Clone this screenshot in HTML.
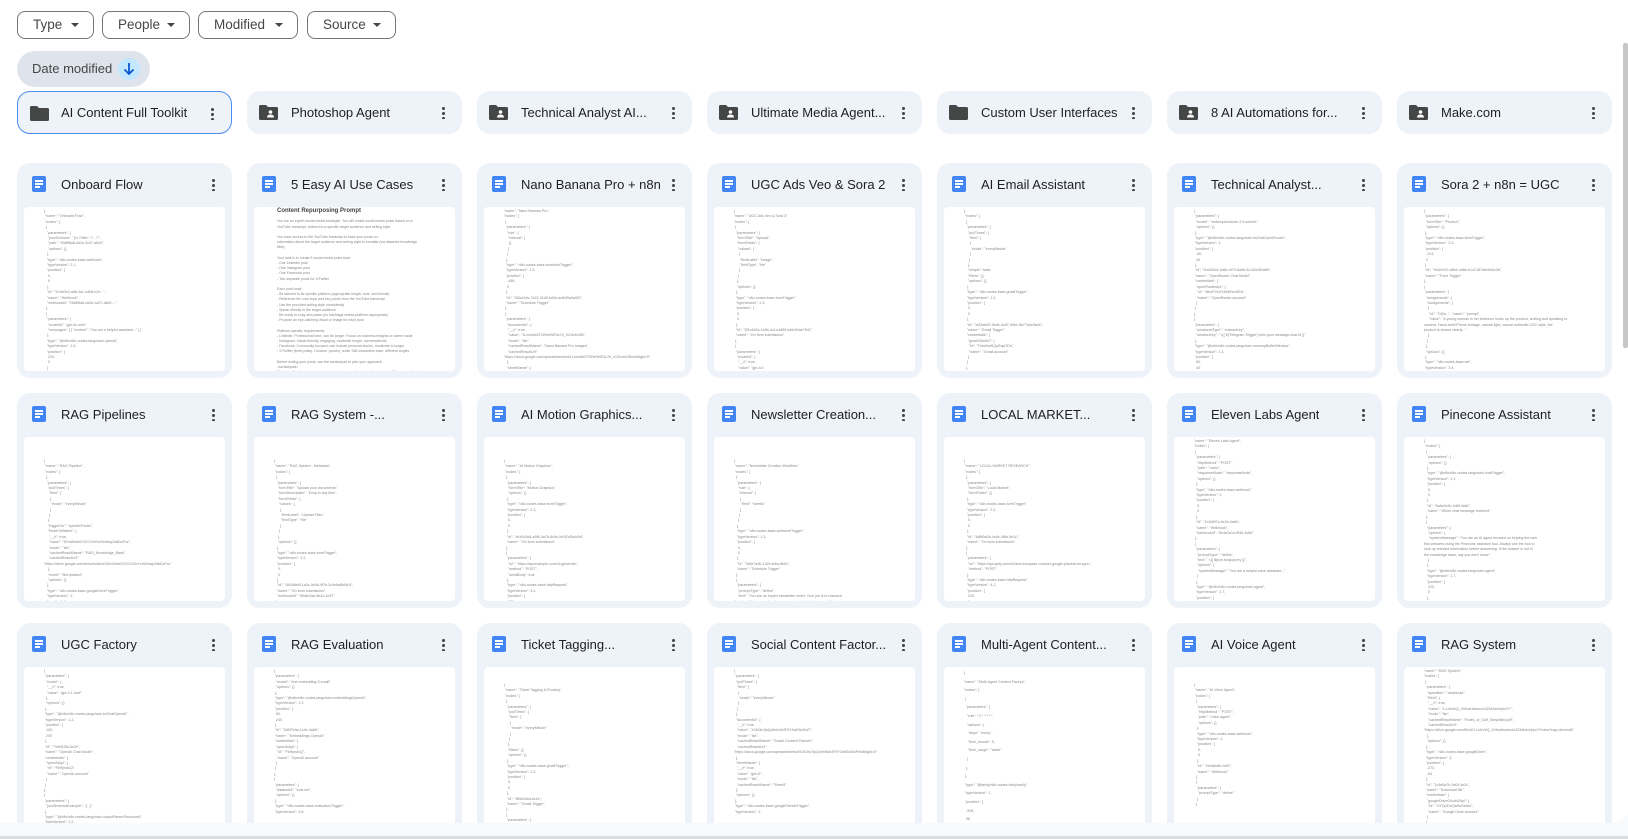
<!DOCTYPE html>
<html><head><meta charset="utf-8"><style>
*{box-sizing:border-box;margin:0;padding:0}
body{width:1628px;height:839px;overflow:hidden;background:#f8fafd;font-family:"Liberation Sans",Arial,sans-serif;color:#1f1f1f;position:relative}
.panel{position:absolute;left:0;top:0;width:1628px;height:823px;background:#fff;border-bottom-right-radius:14px;overflow:hidden}
.line{position:absolute;left:0;top:836px;width:1628px;height:3px;background:#dadce0}
.chip{position:absolute;top:11px;height:28px;border:1px solid #747775;border-radius:8px;font-size:13.5px;line-height:26px;padding-left:15px;color:#444746}
.chip:after{content:"";position:absolute;right:14px;top:11px;border-left:4px solid transparent;border-right:4px solid transparent;border-top:4px solid #444746}
.sort{position:absolute;left:17px;top:51px;width:133px;height:36px;border-radius:18px;background:#dfe3eb;font-size:13px;line-height:36px;padding-left:15px;color:#444746}
.sort .ar{position:absolute;left:101px;top:7px;width:22px;height:22px;border-radius:11px;background:#c2e7ff}
.card{position:absolute;width:215px;background:#eef2f9;border-radius:13px;overflow:hidden}
.folder{height:43px;top:91px}
.folder.sel{background:#eef2f9;border:1px solid #4d8df0}
.doc{height:215px}
.t{position:absolute;left:44px;max-width:142px;overflow:hidden;text-overflow:ellipsis;font-size:13px;color:#1f1f1f;white-space:nowrap}
.folder .t{top:14px}
.folder.sel .t{top:13px;left:43px}
.doc .t{top:14px}
.k{position:absolute;right:17px;width:3px;height:13px;background:radial-gradient(circle,#444746 1.4px,transparent 1.6px) 0 0/3px 5px repeat-y}
.folder .k{top:15px}
.doc .k{top:15px}
.fi{position:absolute;left:12px;top:14px;width:19px;height:15px}
.di{position:absolute;left:15px;top:13px;width:14px;height:16px;background:#4285f4;border-radius:2px}
.di i{position:absolute;left:3px;width:8px;height:1.6px;background:#fff}
.pv{position:absolute;left:7px;top:44px;width:201px;height:164px;background:#fff;border-radius:4px;overflow:hidden}
.pv pre{position:absolute;left:20px;top:2px;font-family:"Liberation Sans",sans-serif;font-size:3.6px;line-height:5.4px;color:#888;white-space:pre}
.sb{position:absolute;left:1623px;top:43px;width:5px;height:305px;background:#c7c7c7;border-radius:2px}
</style></head><body>
<div class="panel">
<div class="chip" style="left:17px;width:77px">Type</div>
<div class="chip" style="left:102px;width:88px">People</div>
<div class="chip" style="left:198px;width:100px">Modified</div>
<div class="chip" style="left:307px;width:89px">Source</div>
<div class="sort">Date modified<span class="ar"><svg width="22" height="22" viewBox="0 0 22 22"><path d="M11 5v11M6.5 11.5L11 16l4.5-4.5" stroke="#0b57d0" stroke-width="1.8" fill="none"/></svg></span></div>

<div class="card folder sel" style="left:17px"><svg class="fi" viewBox="0 0 19 15"><path d="M0 1.5Q0 0 1.5 0H7l2 2h8.5Q19 2 19 3.5V13.5Q19 15 17.5 15H1.5Q0 15 0 13.5Z" fill="#444746"/></svg><span class="t">AI Content Full Toolkit</span><span class="k"></span></div>
<div class="card folder" style="left:247px"><svg class="fi" viewBox="0 0 19 15"><path d="M0 1.5Q0 0 1.5 0H7l2 2h8.5Q19 2 19 3.5V13.5Q19 15 17.5 15H1.5Q0 15 0 13.5Z" fill="#444746"/><circle cx="11.5" cy="7" r="1.8" fill="#fff"/><path d="M8 12.5q0-3 3.5-3t3.5 3z" fill="#fff"/></svg><span class="t">Photoshop Agent</span><span class="k"></span></div>
<div class="card folder" style="left:477px"><svg class="fi" viewBox="0 0 19 15"><path d="M0 1.5Q0 0 1.5 0H7l2 2h8.5Q19 2 19 3.5V13.5Q19 15 17.5 15H1.5Q0 15 0 13.5Z" fill="#444746"/><circle cx="11.5" cy="7" r="1.8" fill="#fff"/><path d="M8 12.5q0-3 3.5-3t3.5 3z" fill="#fff"/></svg><span class="t">Technical Analyst AI...</span><span class="k"></span></div>
<div class="card folder" style="left:707px"><svg class="fi" viewBox="0 0 19 15"><path d="M0 1.5Q0 0 1.5 0H7l2 2h8.5Q19 2 19 3.5V13.5Q19 15 17.5 15H1.5Q0 15 0 13.5Z" fill="#444746"/><circle cx="11.5" cy="7" r="1.8" fill="#fff"/><path d="M8 12.5q0-3 3.5-3t3.5 3z" fill="#fff"/></svg><span class="t">Ultimate Media Agent...</span><span class="k"></span></div>
<div class="card folder" style="left:937px"><svg class="fi" viewBox="0 0 19 15"><path d="M0 1.5Q0 0 1.5 0H7l2 2h8.5Q19 2 19 3.5V13.5Q19 15 17.5 15H1.5Q0 15 0 13.5Z" fill="#444746"/></svg><span class="t">Custom User Interfaces</span><span class="k"></span></div>
<div class="card folder" style="left:1167px"><svg class="fi" viewBox="0 0 19 15"><path d="M0 1.5Q0 0 1.5 0H7l2 2h8.5Q19 2 19 3.5V13.5Q19 15 17.5 15H1.5Q0 15 0 13.5Z" fill="#444746"/><circle cx="11.5" cy="7" r="1.8" fill="#fff"/><path d="M8 12.5q0-3 3.5-3t3.5 3z" fill="#fff"/></svg><span class="t">8 AI Automations for...</span><span class="k"></span></div>
<div class="card folder" style="left:1397px"><svg class="fi" viewBox="0 0 19 15"><path d="M0 1.5Q0 0 1.5 0H7l2 2h8.5Q19 2 19 3.5V13.5Q19 15 17.5 15H1.5Q0 15 0 13.5Z" fill="#444746"/><circle cx="11.5" cy="7" r="1.8" fill="#fff"/><path d="M8 12.5q0-3 3.5-3t3.5 3z" fill="#fff"/></svg><span class="t">Make.com</span><span class="k"></span></div>

<!-- row 1 -->
<div class="card doc" style="left:17px;top:163px"><span class="di"><i style="top:4px"></i><i style="top:7px"></i><i style="top:10px;width:5px"></i></span><span class="t">Onboard Flow</span><span class="k"></span><div class="pv"><pre>{
 "name": "Onboard Flow",
 "nodes": [
  {
   "parameters": {
    "jsonSchema": "{\n \"title\": \"...\"",
    "path": "f3d8f6a8-dd2e-4c07-a6c0",
    "options": {}
   },
   "type": "n8n-nodes-base.webhook",
   "typeVersion": 2.1,
   "position": [
    0,
    0
   ],
   "id": "b7ab0e3-dd6-4a1-a4b8-b2e...",
   "name": "Webhook",
   "webhookId": "f3d8f6a8-dd2e-4c07-a6c0-..."
  },
  {
   "parameters": {
    "modelId": "gpt-4o-mini",
    "messages": [ { "content": "You are a helpful assistant..." } ]
   },
   "type": "@n8n/n8n-nodes-langchain.openAi",
   "typeVersion": 1.8,
   "position": [
    220,
    0
   ]
  },
  "id": "8a02c1b4-ad62-4e0d-ba83",
  "name": "OpenAI"
 ]
}</pre></div></div>
<div class="card doc" style="left:247px;top:163px"><span class="di"><i style="top:4px"></i><i style="top:7px"></i><i style="top:10px;width:5px"></i></span><span class="t">5 Easy AI Use Cases</span><span class="k"></span><div class="pv"><pre style="left:23px;font-size:3.5px;line-height:5.2px"><b style="font-size:6px;color:#444">Content Repurposing Prompt</b>

You are an expert social media strategist. You will create social media posts based on a
YouTube transcript, tailored to a specific target audience and writing style.

You have access to the YouTube transcript to base your posts on,
information about the target audience and writing style to emulate (via attached knowledge
files).

Your task is to create 5 social media posts total:
- One LinkedIn post
- One Instagram post
- One Facebook post
- Two separate posts for X/Twitter

Each post must:
- Be tailored to its specific platform (appropriate length, tone, and format)
- Reference the core topic and key points from the YouTube transcript
- Use the provided writing style consistently
- Speak directly to the target audience
- Be ready to copy-and-paste (no hashtags unless platform-appropriate)
- Propose an eye-catching visual or image for each post

Platform-specific requirements:
- LinkedIn: Professional tone, can be longer. Focus on business insights or career value
- Instagram: Visual-friendly, engaging, moderate length, conversational
- Facebook: Community-focused, can include personal stories, moderate to longer
- X/Twitter (both posts): Concise, punchy, under 280 characters each, different angles

Before writing your posts, use the scratchpad to plan your approach
&lt;scratchpad&gt;
First, identify the core topic and main value proposition from the transcript. Then, consider how</pre></div></div>
<div class="card doc" style="left:477px;top:163px"><span class="di"><i style="top:4px"></i><i style="top:7px"></i><i style="top:10px;width:5px"></i></span><span class="t">Nano Banana Pro + n8n</span><span class="k"></span><div class="pv"><pre>"name": "Nano Banana Pro",
"nodes": [
 {
  "parameters": {
   "rule": {
    "interval": [
     {}
    ]
   }
  },
  "type": "n8n-nodes-base.scheduleTrigger",
  "typeVersion": 1.2,
  "position": [
   -496,
   0
  ],
  "id": "4f3a1b9c-7e22-41d0-bd3e-acfb30a5a0f3",
  "name": "Schedule Trigger"
 },
 {
  "parameters": {
   "documentId": {
    "__rl": true,
    "value": "1LnvbAb3TOHe0WE3z7e_X2Jlv4nGB",
    "mode": "list",
    "cachedResultName": "Nano Banana Pro Images",
    "cachedResultUrl":
"https://docs.google.com/spreadsheets/d/1LnvbAb3TOHe0WE3z7e_X2Jlv4nGB/edit#gid=0"
   },
   "sheetName": {
    "__rl": true,
    "value": "gid=0",
    "mode": "list"
   }
  }
 }</pre></div></div>
<div class="card doc" style="left:707px;top:163px"><span class="di"><i style="top:4px"></i><i style="top:7px"></i><i style="top:10px;width:5px"></i></span><span class="t">UGC Ads Veo &amp; Sora 2</span><span class="k"></span><div class="pv"><pre>{
"name": "UGC Ads Veo & Sora 2",
"nodes": [
 {
  "parameters": {
   "formTitle": "Upload",
   "formFields": {
    "values": [
     {
      "fieldLabel": "Image",
      "fieldType": "file"
     }
    ]
   },
   "options": {}
  },
  "type": "n8n-nodes-base.formTrigger",
  "typeVersion": 2.3,
  "position": [
   0,
   0
  ],
  "id": "5f1c4d2a-1e6b-4c1a-b89f-ba9c02ae75d1",
  "name": "On form submission"
 },
 {
  "parameters": {
   "modelId": {
    "__rl": true,
    "value": "gpt-4o",
    "mode": "list"
   },
   "messages": { "values": [ { "content": "..." } ] }
  }
 }</pre></div></div>
<div class="card doc" style="left:937px;top:163px"><span class="di"><i style="top:4px"></i><i style="top:7px"></i><i style="top:10px;width:5px"></i></span><span class="t">AI Email Assistant</span><span class="k"></span><div class="pv"><pre>{
 "nodes": [
  {
   "parameters": {
    "pollTimes": {
     "item": [
      {
       "mode": "everyMinute"
      }
     ]
    },
    "simple": false,
    "filters": {},
    "options": {}
   },
   "type": "n8n-nodes-base.gmailTrigger",
   "typeVersion": 1.3,
   "position": [
    0,
    0
   ],
   "id": "c0f3ab92-5bde-4c87-90b2-ffa77a0e9a2e",
   "name": "Gmail Trigger",
   "credentials": {
    "gmailOAuth2": {
     "id": "ThsbHwSQyGqwTDs",
     "name": "Gmail account"
    }
   }
  },
  {
   "parameters": {
    "inputText": "={{ $json.text }}"
   }
  }</pre></div></div>
<div class="card doc" style="left:1167px;top:163px"><span class="di"><i style="top:4px"></i><i style="top:7px"></i><i style="top:10px;width:5px"></i></span><span class="t">Technical Analyst...</span><span class="k"></span><div class="pv"><pre>{
 "parameters": {
  "model": "anthropic/claude-3.5-sonnet",
  "options": {}
 },
 "type": "@n8n/n8n-nodes-langchain.lmChatOpenRouter",
 "typeVersion": 1,
 "position": [
  -80,
  40
 ],
 "id": "f1a2b3c4-5d6e-4f70-8a9b-0c1d2e3f4a5b",
 "name": "OpenRouter Chat Model",
 "credentials": {
  "openRouterApi": {
   "id": "tkbcPVvXXMl1fNe4Ehe",
   "name": "OpenRouter account"
  }
 }
},
{
 "parameters": {
  "sessionIdType": "customKey",
  "sessionKey": "={{ $('Telegram Trigger').item.json.message.chat.id }}"
 },
 "type": "@n8n/n8n-nodes-langchain.memoryBufferWindow",
 "typeVersion": 1.3,
 "position": [
  60,
  40
 ],
 "id": "7e0a4b12-93cd-4e1f-a5b6-1c2d3e4f5a6b",
 "name": "Simple Memory"
},</pre></div></div>
<div class="card doc" style="left:1397px;top:163px"><span class="di"><i style="top:4px"></i><i style="top:7px"></i><i style="top:10px;width:5px"></i></span><span class="t">Sora 2 + n8n = UGC</span><span class="k"></span><div class="pv"><pre>{
 "parameters": {
  "formTitle": "Product",
  "options": {}
 },
 "type": "n8n-nodes-base.formTrigger",
 "typeVersion": 2.3,
 "position": [
  -224,
  0
 ],
 "id": "9c3e2f10-a8b4-4d8e-b1c2-8f7a6e5d4c3b",
 "name": "Form Trigger"
},
{
 "parameters": {
  "assignments": {
   "assignments": [
    {
     "id": "7d2a...", "name": "prompt",
     "value": "A young woman in her bedroom holds up the product, smiling and speaking to
camera. Hand-held iPhone footage, natural light, casual authentic UGC style, the
product is shown clearly..."
    }
   ]
  },
  "options": {}
 },
 "type": "n8n-nodes-base.set",
 "typeVersion": 3.4,
 "position": [
  0,
  0
 ],
 "id": "2f4e6a8c-0b1d-4e3f-9a7c",
 "name": "Edit Fields"
},</pre></div></div>

<!-- row 2 -->
<div class="card doc" style="left:17px;top:393px"><span class="di"><i style="top:4px"></i><i style="top:7px"></i><i style="top:10px;width:5px"></i></span><span class="t">RAG Pipelines</span><span class="k"></span><div class="pv"><pre style="top:22px">{
 "name": "RAG Pipeline",
 "nodes": [
  {
   "parameters": {
    "pollTimes": {
     "item": [
      {
       "mode": "everyMinute"
      }
     ]
    },
    "triggerOn": "specificFolder",
    "folderToWatch": {
     "__rl": true,
     "value": "1EmWwbXVOCUVkYmSnNwp3dkDzFxz",
     "mode": "list",
     "cachedResultName": "RAG_Knowledge_Base",
     "cachedResultUrl":
"https://drive.google.com/drive/folders/1EmWwbXVOCUVkYmSnNwp3dkDzFxz"
    },
    "event": "fileUpdated",
    "options": {}
   },
   "type": "n8n-nodes-base.googleDriveTrigger",
   "typeVersion": 1,
   "position": [
    -528,
    -64
   ]</pre></div></div>
<div class="card doc" style="left:247px;top:393px"><span class="di"><i style="top:4px"></i><i style="top:7px"></i><i style="top:10px;width:5px"></i></span><span class="t">RAG System -...</span><span class="k"></span><div class="pv"><pre style="top:22px">{
 "name": "RAG System - Metadata",
 "nodes": [
  {
   "parameters": {
    "formTitle": "Upload your documents",
    "formDescription": "Drop in any files",
    "formFields": {
     "values": [
      {
       "fieldLabel": "Upload Files",
       "fieldType": "file"
      }
     ]
    },
    "options": {}
   },
   "type": "n8n-nodes-base.formTrigger",
   "typeVersion": 2.2,
   "position": [
    0,
    0
   ],
   "id": "4b2d8e6f-1a3c-4e5d-9f7b-2c4e6a8b0d1f",
   "name": "On form submission",
   "webhookId": "5fe8c2ad-9b41-4e37"
  },
  {
   "parameters": {</pre></div></div>
<div class="card doc" style="left:477px;top:393px"><span class="di"><i style="top:4px"></i><i style="top:7px"></i><i style="top:10px;width:5px"></i></span><span class="t">AI Motion Graphics...</span><span class="k"></span><div class="pv"><pre style="top:22px">{
 "name": "AI Motion Graphics",
 "nodes": [
  {
   "parameters": {
    "formTitle": "Motion Graphics",
    "options": {}
   },
   "type": "n8n-nodes-base.formTrigger",
   "typeVersion": 2.3,
   "position": [
    0,
    0
   ],
   "id": "a1b2c3d4-e5f6-4a7b-8c9d-0e1f2a3b4c5d",
   "name": "On form submission"
  },
  {
   "parameters": {
    "url": "https://api.example.com/v1/generate",
    "method": "POST",
    "sendBody": true
   },
   "type": "n8n-nodes-base.httpRequest",
   "typeVersion": 4.2,
   "position": [
    220,
    0
   ]
  }</pre></div></div>
<div class="card doc" style="left:707px;top:393px"><span class="di"><i style="top:4px"></i><i style="top:7px"></i><i style="top:10px;width:5px"></i></span><span class="t">Newsletter Creation...</span><span class="k"></span><div class="pv"><pre style="top:22px">{
 "name": "Newsletter Creation Workflow",
 "nodes": [
  {
   "parameters": {
    "rule": {
     "interval": [
      {
       "field": "weeks"
      }
     ]
    }
   },
   "type": "n8n-nodes-base.scheduleTrigger",
   "typeVersion": 1.2,
   "position": [
    0,
    0
   ],
   "id": "3c5e7a9b-1d2f-4e6a-8b0c",
   "name": "Schedule Trigger"
  },
  {
   "parameters": {
    "promptType": "define",
    "text": "You are an expert newsletter writer. Your job is to research
the latest AI news and write an engaging, informative newsletter for a
business audience. Focus on practical takeaways, real tools and
concrete examples..."
   }
  }</pre></div></div>
<div class="card doc" style="left:937px;top:393px"><span class="di"><i style="top:4px"></i><i style="top:7px"></i><i style="top:10px;width:5px"></i></span><span class="t">LOCAL MARKET...</span><span class="k"></span><div class="pv"><pre style="top:22px">{
 "name": "LOCAL MARKET RESEARCH",
 "nodes": [
  {
   "parameters": {
    "formTitle": "Local Market",
    "formFields": {}
   },
   "type": "n8n-nodes-base.formTrigger",
   "typeVersion": 2.2,
   "position": [
    0,
    0
   ],
   "id": "6d8f0a2b-4c6e-4f8a-9b1c",
   "name": "On form submission"
  },
  {
   "parameters": {
    "url": "https://api.apify.com/v2/acts/compass~crawler-google-places/run-sync",
    "method": "POST"
   },
   "type": "n8n-nodes-base.httpRequest",
   "typeVersion": 4.2,
   "position": [
    220,
    0
   ],
   "id": "0e2a4c6b-8d1f",
   "name": "HTTP Request"
  }</pre></div></div>
<div class="card doc" style="left:1167px;top:393px"><span class="di"><i style="top:4px"></i><i style="top:7px"></i><i style="top:10px;width:5px"></i></span><span class="t">Eleven Labs Agent</span><span class="k"></span><div class="pv"><pre>"name": "Eleven Labs Agent",
"nodes": [
 {
  "parameters": {
   "httpMethod": "POST",
   "path": "voice",
   "responseMode": "responseNode",
   "options": {}
  },
  "type": "n8n-nodes-base.webhook",
  "typeVersion": 2,
  "position": [
   0,
   0
  ],
  "id": "1b3d5f7a-9c2e-4a6b",
  "name": "Webhook",
  "webhookId": "8c4e2a1d-6f3b-4d5e"
 },
 {
  "parameters": {
   "promptType": "define",
   "text": "={{ $json.body.query }}",
   "options": {
    "systemMessage": "You are a helpful voice assistant..."
   }
  },
  "type": "@n8n/n8n-nodes-langchain.agent",
  "typeVersion": 1.7,
  "position": [
   220,
   0
  ]</pre></div></div>
<div class="card doc" style="left:1397px;top:393px"><span class="di"><i style="top:4px"></i><i style="top:7px"></i><i style="top:10px;width:5px"></i></span><span class="t">Pinecone Assistant</span><span class="k"></span><div class="pv"><pre>{
 "nodes": [
  {
   "parameters": {
    "options": {}
   },
   "type": "@n8n/n8n-nodes-langchain.chatTrigger",
   "typeVersion": 1.1,
   "position": [
    0,
    0
   ],
   "id": "6a8c0e2b-4d6f-4a8c",
   "name": "When chat message received"
  },
  {
   "parameters": {
    "options": {
     "systemMessage": "You are an AI agent focused on helping the user
find answers using the Pinecone assistant tool. Always use the tool to
look up relevant information before answering. If the answer is not in
the knowledge base, say you don't know."
    }
   },
   "type": "@n8n/n8n-nodes-langchain.agent",
   "typeVersion": 1.7,
   "position": [
    220,
    0
   ],
   "id": "9e1a3c5b-7d0f",
   "name": "AI Agent"
  },</pre></div></div>

<!-- row 3 -->
<div class="card doc" style="left:17px;top:623px"><span class="di"><i style="top:4px"></i><i style="top:7px"></i><i style="top:10px;width:5px"></i></span><span class="t">UGC Factory</span><span class="k"></span><div class="pv"><pre>{
 "parameters": {
  "model": {
   "__rl": true,
   "value": "gpt-4.1-mini"
  },
  "options": {}
 },
 "type": "@n8n/n8n-nodes-langchain.lmChatOpenAi",
 "typeVersion": 1.2,
 "position": [
  100,
  200
 ],
 "id": "7b9d1f3a-5c2e",
 "name": "OpenAI Chat Model",
 "credentials": {
  "openAiApi": {
   "id": "FkHjmAvQ",
   "name": "OpenAI account"
  }
 }
},
{
 "parameters": {
  "jsonSchemaExample": "{...}"
 },
 "type": "@n8n/n8n-nodes-langchain.outputParserStructured",
 "typeVersion": 1.2,</pre></div></div>
<div class="card doc" style="left:247px;top:623px"><span class="di"><i style="top:4px"></i><i style="top:7px"></i><i style="top:10px;width:5px"></i></span><span class="t">RAG Evaluation</span><span class="k"></span><div class="pv"><pre>{
 "parameters": {
  "model": "text-embedding-3-small",
  "options": {}
 },
 "type": "@n8n/n8n-nodes-langchain.embeddingsOpenAi",
 "typeVersion": 1.2,
 "position": [
  80,
  240
 ],
 "id": "3d5f7b9a-1c4e-4a6b",
 "name": "Embeddings OpenAI",
 "credentials": {
  "openAiApi": {
   "id": "FkHjmAvQ",
   "name": "OpenAI account"
  }
 }
},
{
 "parameters": {
  "datasetId": "eval-set",
  "options": {}
 },
 "type": "n8n-nodes-base.evaluationTrigger",
 "typeVersion": 4.6,</pre></div></div>
<div class="card doc" style="left:477px;top:623px"><span class="di"><i style="top:4px"></i><i style="top:7px"></i><i style="top:10px;width:5px"></i></span><span class="t">Ticket Tagging...</span><span class="k"></span><div class="pv"><pre style="top:16px">{
 "name": "Ticket Tagging & Routing",
 "nodes": [
  {
   "parameters": {
    "pollTimes": {
     "item": [
      {
       "mode": "everyMinute"
      }
     ]
    },
    "filters": {},
    "options": {}
   },
   "type": "n8n-nodes-base.gmailTrigger",
   "typeVersion": 1.3,
   "position": [
    0,
    0
   ],
   "id": "8f0b2d4a-6c1e",
   "name": "Gmail Trigger"
  },
  {
   "parameters": {</pre></div></div>
<div class="card doc" style="left:707px;top:623px"><span class="di"><i style="top:4px"></i><i style="top:7px"></i><i style="top:10px;width:5px"></i></span><span class="t">Social Content Factor...</span><span class="k"></span><div class="pv"><pre>{
 "parameters": {
  "pollTimes": {
   "item": [
    {
     "mode": "everyMinute"
    }
   ]
  },
  "documentId": {
   "__rl": true,
   "value": "1Xb2kL9pQz8mN4vR7tY3wE6uI0oP",
   "mode": "list",
   "cachedResultName": "Social Content Planner",
   "cachedResultUrl":
"https://docs.google.com/spreadsheets/d/1Xb2kL9pQz8mN4vR7tY3wE6uI0oP/edit#gid=0"
  },
  "sheetName": {
   "__rl": true,
   "value": "gid=0",
   "mode": "list",
   "cachedResultName": "Sheet1"
  },
  "options": {}
 },
 "type": "n8n-nodes-base.googleSheetsTrigger",
 "typeVersion": 1,</pre></div></div>
<div class="card doc" style="left:937px;top:623px"><span class="di"><i style="top:4px"></i><i style="top:7px"></i><i style="top:10px;width:5px"></i></span><span class="t">Multi-Agent Content...</span><span class="k"></span><div class="pv"><pre style="line-height:8.6px">{
"name": "Multi-Agent Content Factory",
"nodes": [
 {
  "parameters": {
   "rule": "0 * * * *",
   "options": {
    "days": "every",
    "time_results": 5,
    "time_range": "week"
   }
  },
 },
 "type": "@tavily/n8n-nodes-tavily.tavily",
 "typeVersion": 1,
 "position": [
  -928,
  96
 ],
 "id": "4a6c8e0b-2d1f-4e3a-b5c7"</pre></div></div>
<div class="card doc" style="left:1167px;top:623px"><span class="di"><i style="top:4px"></i><i style="top:7px"></i><i style="top:10px;width:5px"></i></span><span class="t">AI Voice Agent</span><span class="k"></span><div class="pv"><pre style="top:16px">{
 "name": "AI Voice Agent",
 "nodes": [
  {
   "parameters": {
    "httpMethod": "POST",
    "path": "voice-agent",
    "options": {}
   },
   "type": "n8n-nodes-base.webhook",
   "typeVersion": 2,
   "position": [
    0,
    0
   ],
   "id": "2e4a6c8b-0d1f",
   "name": "Webhook"
  },
  {
   "parameters": {
    "promptType": "define"
   }
  }</pre></div></div>
<div class="card doc" style="left:1397px;top:623px"><span class="di"><i style="top:4px"></i><i style="top:7px"></i><i style="top:10px;width:5px"></i></span><span class="t">RAG System</span><span class="k"></span><div class="pv"><pre>"name": "RAG System",
"nodes": [
 {
  "parameters": {
   "operation": "download",
   "fileId": {
    "__rl": true,
    "value": "1-LnbVbQ_3XfvaHsweo4x3ZM4dm0ptcXY",
    "mode": "list",
    "cachedResultName": "Rules_of_Golf_Simplified.pdf",
    "cachedResultUrl":
"https://drive.google.com/file/d/1-LnbVbQ_3XfvaHsweo4x3ZM4dm0ptcXY/view?usp=drivesdk"
   },
   "options": {}
  },
  "type": "n8n-nodes-base.googleDrive",
  "typeVersion": 3,
  "position": [
   -272,
   -64
  ],
  "id": "1c3e5a7b-9d0f-4a2c",
  "name": "Download file",
  "credentials": {
   "googleDriveOAuth2Api": {
    "id": "O1TyZDeQw9dSeww",
    "name": "Google Drive account"
   }
  }
 },
 {
  "parameters": {
   "mode": "insert",</pre></div></div>

<div class="sb"></div>
</div>
<div class="line"></div>
</body></html>
